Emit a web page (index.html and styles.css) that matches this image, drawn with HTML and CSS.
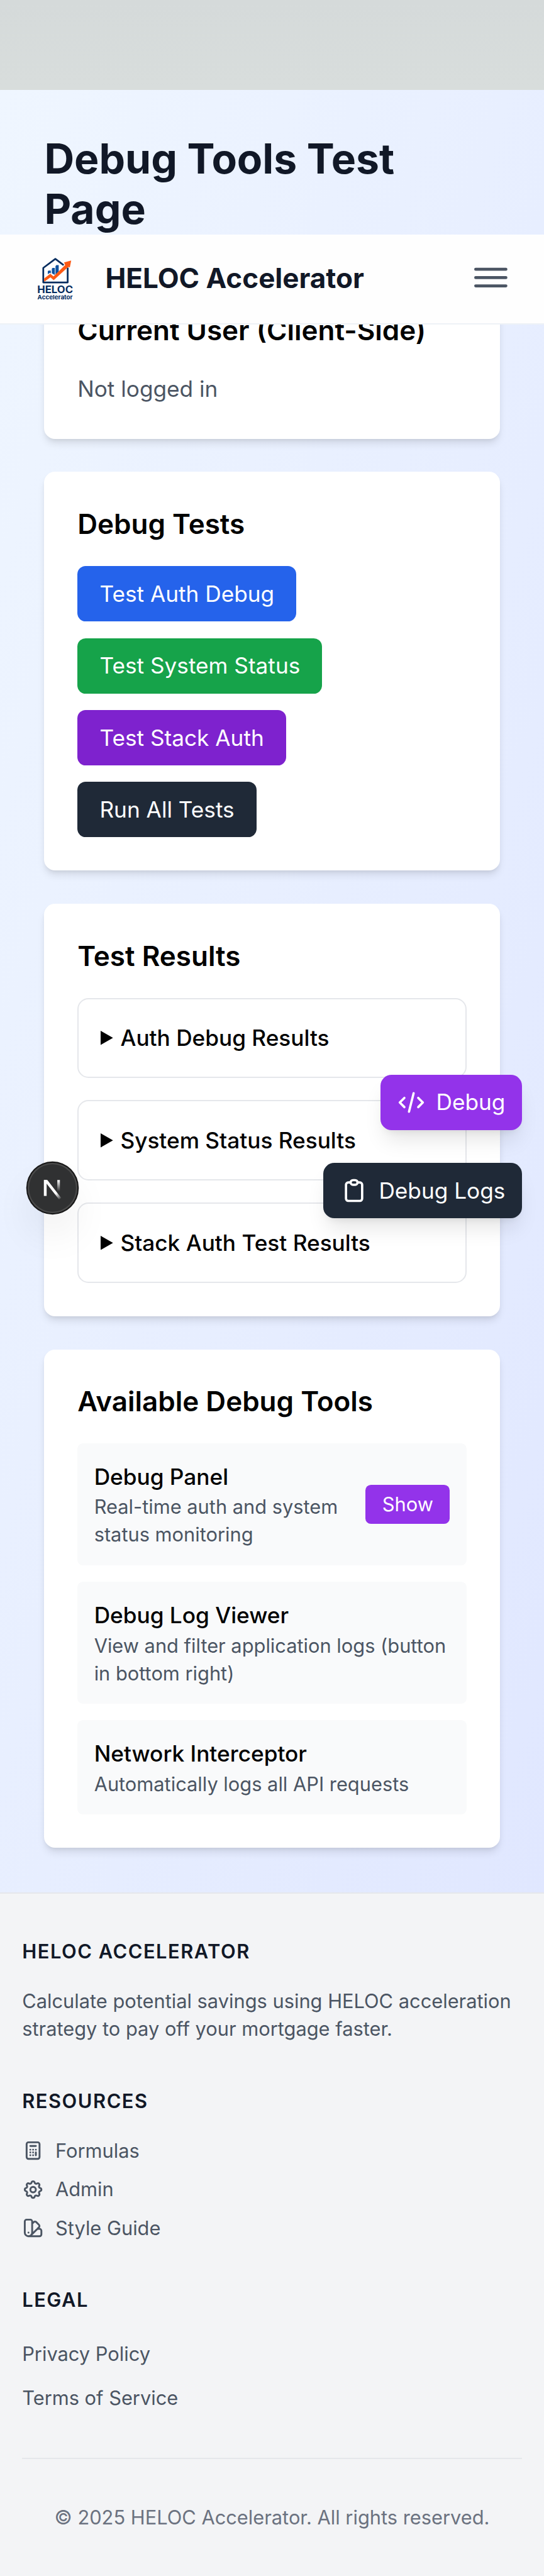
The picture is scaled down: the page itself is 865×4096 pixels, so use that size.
FILE: index.html
```html
<!DOCTYPE html>
<html lang="en">
<head>
<meta charset="utf-8">
<title>HELOC Accelerator - Debug Tools</title>
<link rel="stylesheet" href="styles.css">
</head>
<body>
<header class="site-header">
  <div class="brand">
    <svg class="brand-logo" viewBox="0 0 80 96">
      <path class="logo-house" d="M69.500 42 V71.300 H21 V42.500 L45 24.500 L61.500 37"/>
      <path class="logo-bars" d="M30 49 L31.500 47.700 H36 V53 L33.500 52.500 L30 55Z M38 44 L39.500 42.500 H44 V56.500 L38 53Z M45.300 39 L47 37 H51.700 V50 L45.300 56Z"/>
      <path class="logo-arrow" d="M22.800 70 V63.500 L35 54 L41.300 59.200 L64.500 36.800 L62.300 31.500 L76.500 27.800 L73.800 41.500 L70.500 40.500 L41.700 66.800 L35.300 61.300 Z"/>
      <text class="logo-name" x="9" y="93" textLength="71" lengthAdjust="spacingAndGlyphs">HELOC</text>
      <text class="logo-sub" x="9.500" y="105.500" textLength="70" lengthAdjust="spacingAndGlyphs">Accelerator</text>
    </svg>
    <span class="brand-name">HELOC Accelerator</span>
  </div>
  <svg class="menu" viewBox="0 0 24 24"><path d="M1.100 6h21.800M1.100 12h21.800M1.100 18h21.800"/></svg>
</header>

<main class="page">
  <h1>Debug Tools Test Page</h1>
  <section class="card">
    <h2>Current User (Client-Side)</h2>
    <p class="muted">Not logged in</p>
  </section>
  <section class="card">
    <h2>Debug Tests</h2>
    <div class="tests">
      <button class="btn blue">Test Auth Debug</button>
      <button class="btn green">Test System Status</button>
      <button class="btn purple">Test Stack Auth</button>
      <button class="btn dark">Run All Tests</button>
    </div>
  </section>
  <section class="card">
    <h2>Test Results</h2>
    <div class="results">
      <div class="result"><svg class="marker" viewBox="0 0 9 12" preserveAspectRatio="none"><path d="M0 0 L9 6 L0 12Z"/></svg>Auth Debug Results</div>
      <div class="result"><svg class="marker" viewBox="0 0 9 12" preserveAspectRatio="none"><path d="M0 0 L9 6 L0 12Z"/></svg>System Status Results</div>
      <div class="result"><svg class="marker" viewBox="0 0 9 12" preserveAspectRatio="none"><path d="M0 0 L9 6 L0 12Z"/></svg>Stack Auth Test Results</div>
    </div>
  </section>
  <section class="card">
    <h2>Available Debug Tools</h2>
    <div class="tools">
      <div class="tool">
        <div><h3>Debug Panel</h3><p>Real-time auth and system status monitoring</p></div>
        <button class="show">Show</button>
      </div>
      <div class="tool">
        <div><h3>Debug Log Viewer</h3><p>View and filter application logs (button in bottom right)</p></div>
      </div>
      <div class="tool">
        <div><h3>Network Interceptor</h3><p>Automatically logs all API requests</p></div>
      </div>
    </div>
  </section>
</main>

<footer class="footer">
  <div class="footer-cols">
    <div>
      <h4>HELOC Accelerator</h4>
      <p>Calculate potential savings using HELOC acceleration strategy to pay off your mortgage faster.</p>
    </div>
    <div>
      <h4>Resources</h4>
      <ul class="resources">
        <li><svg class="icon" viewBox="0 0 24 24"><path d="M9 7h6m0 10v-3m-3 3h.01M9 17h.01M9 14h.01M12 14h.01M15 11h.01M12 11h.01M9 11h.01M7 21h10a2 2 0 002-2V5a2 2 0 00-2-2H7a2 2 0 00-2 2v14a2 2 0 002 2z"/></svg>Formulas</li>
        <li><svg class="icon" viewBox="0 0 24 24"><path d="M10.325 4.317c.426-1.756 2.924-1.756 3.35 0a1.724 1.724 0 002.573 1.066c1.543-.94 3.31.826 2.37 2.37a1.724 1.724 0 001.065 2.572c1.756.426 1.756 2.924 0 3.35a1.724 1.724 0 00-1.066 2.573c.94 1.543-.826 3.31-2.37 2.37a1.724 1.724 0 00-2.572 1.065c-.426 1.756-2.924 1.756-3.35 0a1.724 1.724 0 00-2.573-1.066c-1.543.94-3.31-.826-2.37-2.37a1.724 1.724 0 00-1.065-2.572c-1.756-.426-1.756-2.924 0-3.35a1.724 1.724 0 001.066-2.573c-.94-1.543.826-3.31 2.37-2.37.996.608 2.296.07 2.572-1.065z"/><path d="M15 12a3 3 0 11-6 0 3 3 0 016 0z"/></svg>Admin</li>
        <li><svg class="icon" viewBox="0 0 24 24"><path d="M7 21a4 4 0 01-4-4V5a2 2 0 012-2h4a2 2 0 012 2v12a4 4 0 01-4 4zm0 0h12a2 2 0 002-2v-4a2 2 0 00-2-2h-2.343M11 7.343l1.657-1.657a2 2 0 012.828 0l2.829 2.829a2 2 0 010 2.828l-8.486 8.485M7 17h.01"/></svg>Style Guide</li>
      </ul>
    </div>
    <div>
      <h4>Legal</h4>
      <ul class="legal">
        <li>Privacy Policy</li>
        <li>Terms of Service</li>
      </ul>
    </div>
  </div>
  <div class="copyright">© 2025 HELOC Accelerator. All rights reserved.</div>
</footer>

<div class="float float-debug">
  <svg class="icon" viewBox="0 0 24 24"><path d="M10 20l4-16m4 4l4 4-4 4M6 16l-4-4 4-4"/></svg>Debug
</div>
<div class="float float-logs">
  <svg class="icon" viewBox="0 0 24 24"><path d="M9 5H7a2 2 0 00-2 2v12a2 2 0 002 2h10a2 2 0 002-2V7a2 2 0 00-2-2h-2M9 5a2 2 0 002 2h2a2 2 0 002-2M9 5a2 2 0 012-2h2a2 2 0 012 2"/></svg>Debug Logs
</div>
<div class="dev-badge">
  <svg viewBox="0 0 36 36">
    <defs>
      <linearGradient id="fade-diagonal" gradientUnits="userSpaceOnUse" x1="19" y1="20" x2="24" y2="26.500"><stop offset="0" stop-color="#fff"/><stop offset=".3" stop-color="#fff"/><stop offset="1" stop-color="#fff" stop-opacity="0"/></linearGradient>
      <linearGradient id="fade-stem" x1="0" y1="0" x2="0" y2="1"><stop offset="0" stop-color="#fff"/><stop offset="1" stop-color="#fff" stop-opacity="0"/></linearGradient>
    </defs>
    <rect x="11.700" y="12.400" width="2" height="11.500" fill="#fff"/>
    <path d="M11.700 12.400 H14.200 L24.200 25.300 L22.700 26.500 L13.200 14.400Z" fill="url(#fade-diagonal)"/>
    <rect x="21.400" y="12.400" width="1.900" height="8.200" fill="url(#fade-stem)"/>
  </svg>
</div>
</body>
</html>
```
FILE: styles.css
```css
html { font-size: 35.213px; }
* { box-sizing: border-box; margin: 0; padding: 0; }
body {
  position: relative;
  min-height: 4096px;
  padding-top: 4.0625rem;
  background: linear-gradient(#d5dada, #d8dddc 4rem, #d8dddc 4.1rem, #f3f4f6 4.2rem);
  font: 400 1rem/1.5 Inter, sans-serif;
  color: #000;
  overflow-x: hidden;
}
ul { list-style: none; }
button { font: inherit; border: 0; color: #fff; display: block; }

.site-header {
  position: absolute;
  z-index: 5;
  left: 0;
  right: 0;
  top: 10.58rem;
  height: 4.0625rem;
  padding: 0 1.64rem 0 1rem;
  display: flex;
  align-items: center;
  justify-content: space-between;
  background: #fefefe;
  border-bottom: 0.0625rem solid #eef2f6;
}
.brand { display: flex; align-items: center; height: 100%; }
.brand-logo { align-self: flex-start; width: 1.818rem; height: 2.182rem; margin: 0.55rem 1.455rem 0 0.482rem; overflow: visible; }
.logo-house { fill: none; stroke: #052c5e; stroke-width: 3.4; stroke-linejoin: round; }
.logo-bars { fill: #0f529f; }
.logo-arrow { fill: #fc5a14; }
.logo-name { font: 700 19.5px Inter, sans-serif; fill: #052c5e; }
.logo-sub { font: 700 12px Inter, sans-serif; fill: #052c5e; }
.brand-name { font-size: 1.25rem; font-weight: 700; line-height: 1.75rem; color: #111827; }
.menu { width: 1.5rem; height: 1.5rem; margin-top: -0.1rem; fill: none; stroke: #4b5563; stroke-width: 2.2; stroke-linecap: round; }

.page {
  height: 81.375rem;
  padding: 2rem;
  background: linear-gradient(to bottom right, #eff6ff, #e0e7ff);
}
h1 { font-size: 1.875rem; line-height: 2.25rem; font-weight: 700; color: #111827; margin-bottom: 2rem; }
.card {
  background: #fff;
  border-radius: 0.5rem;
  padding: 1.5rem;
  margin-bottom: 1.5rem;
  box-shadow: 0 0.25rem 0.375rem -0.0625rem rgba(0,0,0,.1), 0 0.125rem 0.25rem -0.125rem rgba(0,0,0,.1);
}
h2 { font-size: 1.25rem; line-height: 1.75rem; font-weight: 600; margin-bottom: 1rem; }
.muted { color: #4b5563; }
.tests { display: flex; flex-direction: column; align-items: flex-start; gap: 0.75rem; }
.btn { padding: 0.5rem 1rem; border-radius: 0.375rem; }
.blue { background: #2563eb; }
.green { background: #16a34a; }
.purple { background: #7e22ce; }
.dark { background: #1f2937; }
.results { display: flex; flex-direction: column; gap: 1rem; }
.result {
  display: flex;
  align-items: center;
  height: 3.625rem;
  border: 0.0625rem solid #e5e7eb;
  border-radius: 0.5rem;
  padding: 0 1rem;
  font-weight: 500;
}
.marker { width: 0.56rem; height: 0.64rem; margin-right: 0.32rem; }
.tools { display: flex; flex-direction: column; gap: 0.75rem; }
.tool {
  display: flex;
  align-items: center;
  justify-content: space-between;
  padding: 0.75rem;
  border-radius: 0.25rem;
  background: #f9fafb;
}
h3 { font-size: 1rem; line-height: 1.5rem; font-weight: 500; }
.tool p { font-size: 0.875rem; line-height: 1.25rem; color: #4b5563; }
.show {
  flex: none;
  padding: 0.25rem 0.75rem;
  border-radius: 0.25rem;
  background: #9333ea;
  font-size: 0.875rem;
  line-height: 1.25rem;
}

.icon { fill: none; stroke: currentColor; stroke-width: 2; stroke-linecap: round; stroke-linejoin: round; }

.footer {
  padding: 2rem 1rem;
  background: #f3f4f6;
  border-top: 0.0625rem solid #e5e7eb;
  font-size: 0.875rem;
  line-height: 1.25rem;
  color: #4b5563;
}
.footer-cols { display: flex; flex-direction: column; gap: 2rem; }
h4 {
  font-size: 0.875rem;
  font-weight: 600;
  letter-spacing: 0.05em;
  text-transform: uppercase;
  color: #111827;
  margin-bottom: 1rem;
}
.resources, .legal { display: flex; flex-direction: column; gap: 0.5rem; }
.resources li { display: flex; align-items: center; gap: 0.5rem; }
.resources .icon { width: 1rem; height: 1rem; }
.legal li { height: 1.5rem; line-height: 1.58rem; }
.copyright {
  margin-top: 2rem;
  padding-top: 2rem;
  border-top: 0.0625rem solid #e5e7eb;
  text-align: center;
  color: #6b7280;
}

.float {
  position: absolute;
  z-index: 10;
  right: 1rem;
  display: flex;
  align-items: center;
  gap: 0.5rem;
  padding: 0.5rem 0.75rem;
  border-radius: 0.5rem;
  color: #fff;
  box-shadow: 0 0.625rem 0.9375rem -0.1875rem rgba(0,0,0,.1), 0 0.25rem 0.375rem -0.25rem rgba(0,0,0,.1);
}
.float .icon { width: 1.25rem; height: 1.25rem; }
.float-debug { top: 48.52rem; background: #9333ea; }
.float-logs { top: 52.52rem; background: #1f2937; }

.dev-badge {
  position: absolute;
  z-index: 10;
  left: 1.25rem;
  top: 52.52rem;
  width: 2.25rem;
  height: 2.25rem;
  border-radius: 50%;
  background: #303132;
  box-shadow: inset 0 0 0 0.0625rem #4a4a4a, 0 0 0 0.0625rem #171717, 0 1rem 2rem -0.5rem rgba(0,0,0,.2);
}
.dev-badge svg { display: block; width: 100%; height: 100%; }
```
